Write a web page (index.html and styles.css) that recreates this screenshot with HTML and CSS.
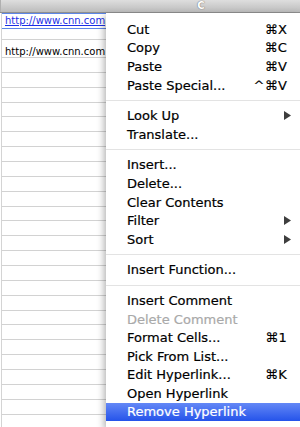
FILE: index.html
```html
<!DOCTYPE html>
<html lang="en">
<head>
  <meta charset="UTF-8">
  <title>Context menu</title>
  <link rel="stylesheet" href="styles.css">
</head>
<body>
  <div class="col-head">
    <div class="col-gap"></div>
    <div class="col-label">C</div>
  </div>

  <div class="sheet">
    <div class="row row-first">
      <span class="cell selected"><a href="#">http://www.cnn.com</a></span>
    </div>
    <div class="row row-second">
      <span class="cell">http://www.cnn.com</span>
    </div>
    <div class="row"></div><div class="row"></div><div class="row"></div><div class="row"></div>
    <div class="row"></div><div class="row"></div><div class="row"></div><div class="row"></div>
    <div class="row"></div><div class="row"></div><div class="row"></div><div class="row"></div>
    <div class="row"></div><div class="row"></div><div class="row"></div><div class="row"></div>
    <div class="row"></div><div class="row"></div><div class="row"></div><div class="row"></div>
    <div class="row"></div><div class="row"></div><div class="row"></div><div class="row"></div>
    <div class="row"></div><div class="row"></div>
  </div>

  <ul class="menu">
    <li class="item"><span>Cut</span><span class="key">⌘X</span></li>
    <li class="item"><span>Copy</span><span class="key">⌘C</span></li>
    <li class="item"><span>Paste</span><span class="key">⌘V</span></li>
    <li class="item"><span>Paste Special...</span><span class="key">^⌘V</span></li>
    <li class="sep"></li>
    <li class="item"><span>Look Up</span><svg class="arrow" width="7" height="9" viewBox="0 0 7 9"><path d="M0 0 L7 4.5 L0 9 Z"/></svg></li>
    <li class="item"><span>Translate...</span></li>
    <li class="sep"></li>
    <li class="item"><span>Insert...</span></li>
    <li class="item"><span>Delete...</span></li>
    <li class="item"><span>Clear Contents</span></li>
    <li class="item"><span>Filter</span><svg class="arrow" width="7" height="9" viewBox="0 0 7 9"><path d="M0 0 L7 4.5 L0 9 Z"/></svg></li>
    <li class="item"><span>Sort</span><svg class="arrow" width="7" height="9" viewBox="0 0 7 9"><path d="M0 0 L7 4.5 L0 9 Z"/></svg></li>
    <li class="sep"></li>
    <li class="item"><span>Insert Function...</span></li>
    <li class="sep"></li>
    <li class="item"><span>Insert Comment</span></li>
    <li class="item disabled"><span>Delete Comment</span></li>
    <li class="item"><span>Format Cells...</span><span class="key">⌘1</span></li>
    <li class="item"><span>Pick From List...</span></li>
    <li class="item"><span>Edit Hyperlink...</span><span class="key">⌘K</span></li>
    <li class="item"><span>Open Hyperlink</span></li>
    <li class="item active"><span>Remove Hyperlink</span></li>
  </ul>
</body>
</html>
```

FILE: styles.css
```css
body {
  margin: 0;
  width: 300px;
  height: 427px;
  overflow: hidden;
  position: relative;
  background-color: #ffffff;
  font-family: 'DejaVu Sans', Verdana, sans-serif;
}

.col-head {
  display: flex;
  height: 12px;
  background: linear-gradient(#dedede, #bcbcbc);
  border-bottom: 1px solid #8f8f8f;
}

.col-gap {
  width: 106px;
  border-left: 1px solid #b0b0b0;
}

.col-label {
  width: 188px;
  text-align: center;
  font-size: 10px;
  line-height: 12px;
  font-weight: bold;
  color: #ffffff;
  text-shadow: 0 0 1px #707070, 0 0 1px #707070;
}

.sheet {
  height: 414px;
  overflow: hidden;
  border-left: 1px solid #d4d4d4;
  margin-left: 1px;
}

.row {
  height: 13.86px;
  border-bottom: 1px solid #d2d2d2;
}

.row-first {
  height: 26px;
}

.row-second {
  height: 17px;
}

.cell {
  display: block;
  font-size: 10px;
  padding-left: 3px;
  color: #000000;
}

.row-second .cell {
  padding-top: 6px;
}

.selected {
  height: 14px;
  line-height: 14px;
  border: 1px solid #5d86e6;
  border-right: none;
  margin-left: -1px;
  padding-left: 3px;
}

.selected a {
  color: #1b2fe6;
  text-decoration: underline;
}

.menu {
  position: absolute;
  left: 106px;
  top: 13px;
  width: 194px;
  height: 414px;
  box-sizing: border-box;
  margin: 0;
  padding: 7px 0 0;
  list-style: none;
  background-color: #ffffff;
  box-shadow: -2px 3px 7px rgba(0, 0, 0, 0.3);
  font-size: 13px;
  color: #000000;
}

.item {
  display: flex;
  align-items: center;
  justify-content: space-between;
  height: 18.6px;
  padding: 0 13px 0 21px;
  white-space: nowrap;
  -webkit-text-stroke: 0.2px currentColor;
}

.key {
  letter-spacing: 0.2px;
}

.arrow {
  fill: #3e3e3e;
  margin-right: -4px;
}

.disabled {
  color: #a9a9a9;
}

.active {
  color: #ffffff;
  background: linear-gradient(#6488f6, #2553ea);
}

.sep {
  height: 12px;
  display: flex;
  align-items: center;
}

.sep::before {
  content: '';
  display: block;
  width: 100%;
  height: 1px;
  background-color: #e3e3e3;
}
```
